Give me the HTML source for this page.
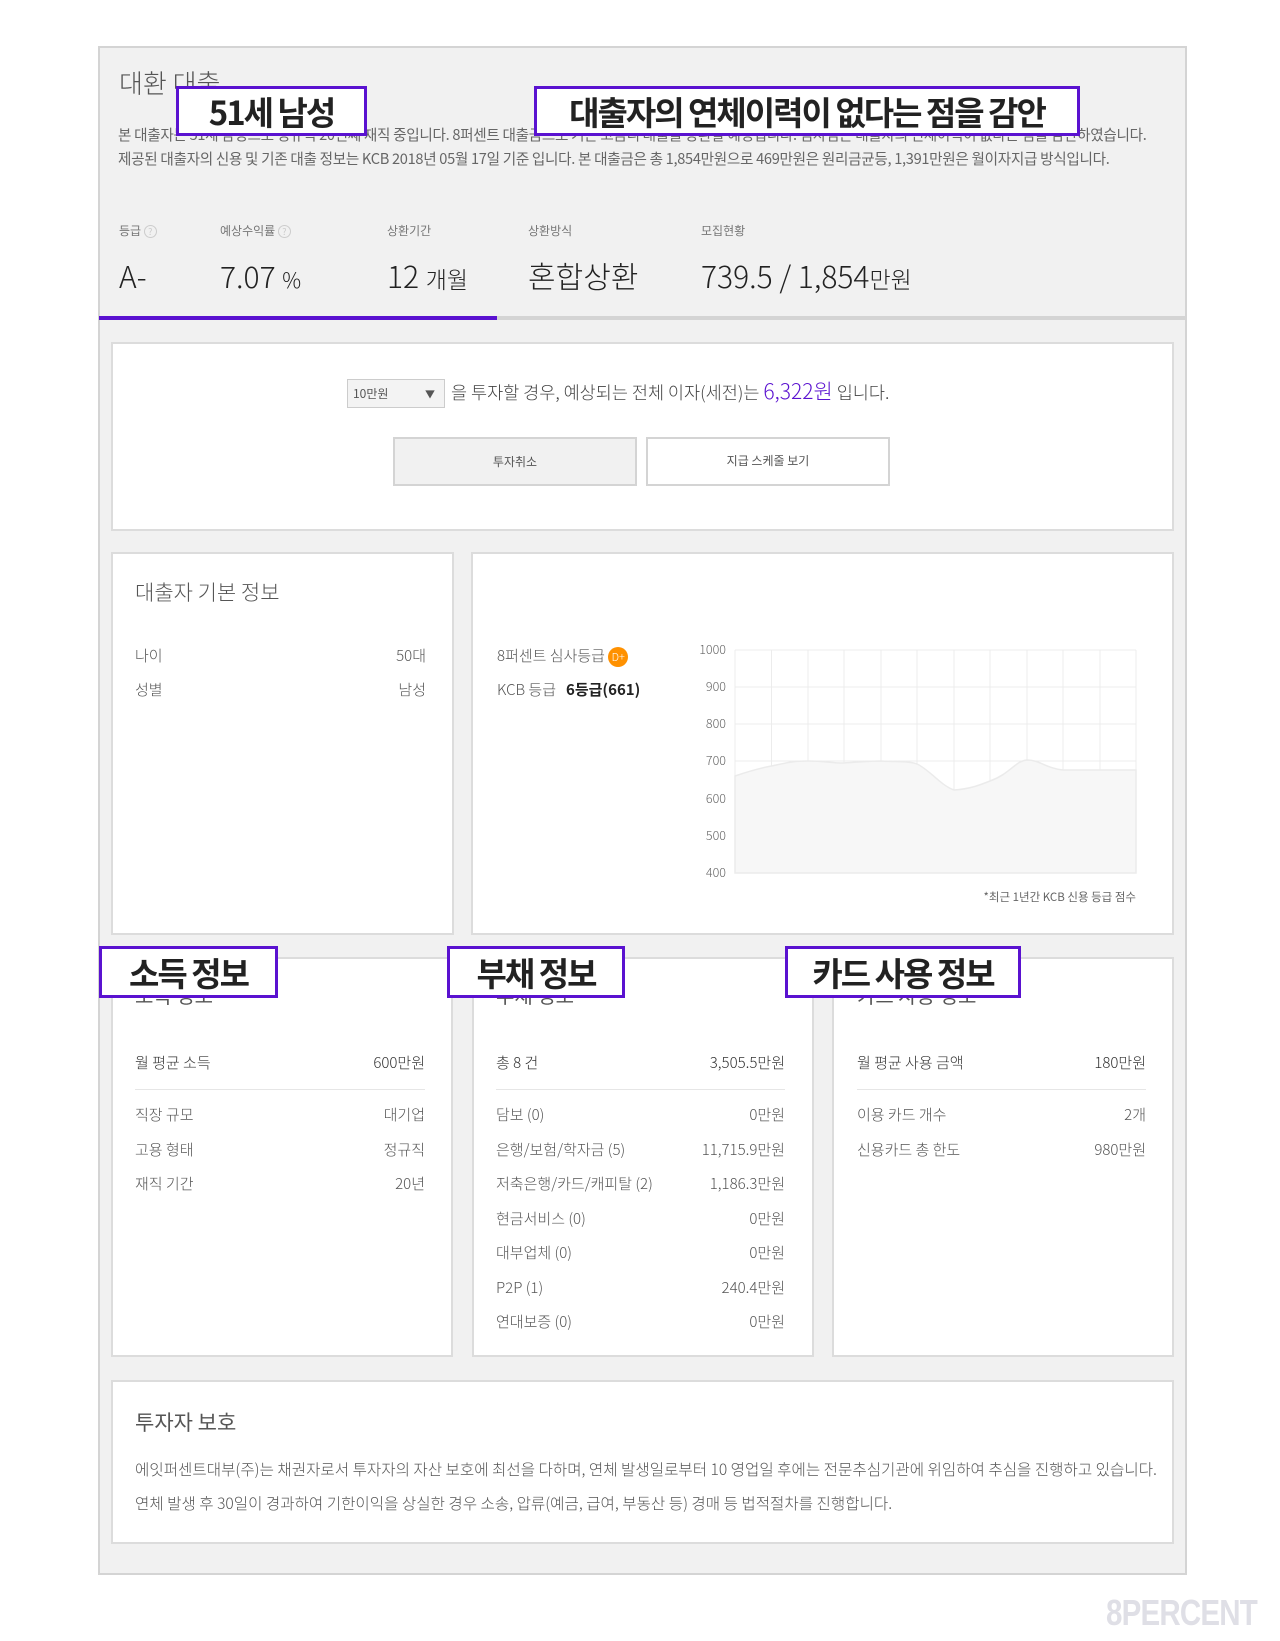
<!DOCTYPE html>
<html><head><meta charset="utf-8">
<style>
*{margin:0;padding:0;box-sizing:border-box}
body{width:1280px;height:1641px;background:#fff;position:relative;font-family:"Noto Sans CJK KR","Liberation Sans",sans-serif;color:#444;overflow:hidden}
.a{position:absolute;white-space:nowrap}
.box{position:absolute;background:#fff;border:2px solid #dcdcdc}
.ann{position:absolute;background:#fff;border:3px solid #5a12d0;font-weight:bold;color:#222;font-size:33px;letter-spacing:-2px;display:flex;align-items:center;justify-content:center;font-family:"Noto Sans CJK KR",sans-serif}
.row{position:absolute;font-size:15px;color:#555;font-weight:300;line-height:20px}
</style></head><body>
<div class="a" style="left:98px;top:46px;width:1089px;height:1529px;background:#f1f1f1;border:2px solid #d4d4d4"></div>

<div class="a" style="left:119px;top:64px;font-size:26px;color:#555;font-weight:300">대환 대출</div>
<div class="a" style="left:118px;top:125px;font-size:14.6px;color:#666;letter-spacing:-0.3px;line-height:20px">본 대출자는 51세 남성으로 정규직 20년째 재직 중입니다. 8퍼센트 대출금으로 기존 고금리 대출을 상환할 예정입니다. 심사팀은 대출자의 연체이력이 없다는 점을 감안하였습니다.</div>
<div class="a" style="left:118px;top:149px;font-size:14.6px;color:#666;letter-spacing:-0.3px;line-height:20px">제공된 대출자의 신용 및 기존 대출 정보는 KCB 2018년 05월 17일 기준 입니다. 본 대출금은 총 1,854만원으로 469만원은 원리금균등, 1,391만원은 월이자지급 방식입니다.</div>

<div class="a" style="left:119px;top:222px;font-size:12px;color:#777">등급 <span style="display:inline-block;width:13px;height:13px;border:1px solid #ccc;border-radius:50%;font-size:9px;text-align:center;line-height:11px;color:#ccc">?</span></div>
<div class="a" style="left:220px;top:222px;font-size:12px;color:#777">예상수익률 <span style="display:inline-block;width:13px;height:13px;border:1px solid #ccc;border-radius:50%;font-size:9px;text-align:center;line-height:11px;color:#ccc">?</span></div>
<div class="a" style="left:387px;top:222px;font-size:12px;color:#777">상환기간</div>
<div class="a" style="left:528px;top:222px;font-size:12px;color:#777">상환방식</div>
<div class="a" style="left:701px;top:222px;font-size:12px;color:#777">모집현황</div>
<div class="a" style="left:119px;top:255px;font-size:30px;color:#222;font-weight:300;line-height:40px">A-</div>
<div class="a" style="left:220px;top:255px;font-size:30px;color:#222;font-weight:300;line-height:40px">7.07 <span style="font-size:21px">%</span></div>
<div class="a" style="left:387px;top:255px;font-size:30px;color:#222;font-weight:300;line-height:40px">12 <span style="font-size:23px">개월</span></div>
<div class="a" style="left:528px;top:255px;font-size:30px;color:#222;font-weight:300;line-height:40px">혼합상환</div>
<div class="a" style="left:701px;top:255px;font-size:30px;color:#222;font-weight:300;line-height:40px">739.5 / 1,854<span style="font-size:23px">만원</span></div>

<div class="a" style="left:99px;top:316px;width:1087px;height:4px;background:#d4d4d4"></div>
<div class="a" style="left:99px;top:316px;width:398px;height:4px;background:#5a12d0"></div>

<div class="box" style="left:111px;top:342px;width:1063px;height:189px"></div>
<div class="a" style="left:347px;top:379px;width:98px;height:29px;border:1px solid #ccc;background:#f3f3f3;font-size:12px;color:#555;padding:5px 0 0 5px">10만원<span style="position:absolute;right:9px;top:6px;font-size:10px">▼</span></div>
<div class="a" style="left:451px;top:379px;font-size:17.5px;color:#444;font-weight:300;line-height:24px">을 투자할 경우, 예상되는 전체 이자(세전)는 <span style="color:#5a12d0;font-size:21px">6,322원</span> 입니다.</div>
<div class="a" style="left:393px;top:437px;width:244px;height:49px;background:#f1f1f1;border:2px solid #d4d4d4;font-size:12px;color:#555;text-align:center;line-height:45px">투자취소</div>
<div class="a" style="left:646px;top:437px;width:244px;height:49px;background:#fff;border:2px solid #d4d4d4;font-size:12px;color:#555;text-align:center;line-height:43px">지급 스케줄 보기</div>

<div class="box" style="left:111px;top:552px;width:343px;height:383px"></div>
<div class="a" style="left:135px;top:577px;font-size:21px;color:#555;font-weight:300">대출자 기본 정보</div>
<div class="row" style="left:135px;top:646px">나이</div><div class="row" style="left:380px;width:46px;text-align:right;top:646px">50대</div>
<div class="row" style="left:135px;top:680px">성별</div><div class="row" style="left:380px;width:46px;text-align:right;top:680px">남성</div>

<div class="box" style="left:471px;top:552px;width:703px;height:383px"></div>
<div class="row" style="left:497px;top:646px">8퍼센트 심사등급 <span style="display:inline-block;width:20px;height:20px;border-radius:50%;background:#ff9100;color:#fff;font-size:11px;text-align:center;line-height:20px;vertical-align:middle">D+</span></div>
<div class="row" style="left:497px;top:680px">KCB 등급 &nbsp; <span style="color:#222;font-weight:bold;font-size:15px">6등급(661)</span></div>
<svg class="a" style="left:690px;top:640px" width="460" height="270">
<g stroke="#ececec" stroke-width="1">
<line x1="45" y1="10" x2="446" y2="10"/><line x1="45" y1="47" x2="446" y2="47"/><line x1="45" y1="84" x2="446" y2="84"/><line x1="45" y1="121" x2="446" y2="121"/><line x1="45" y1="159" x2="446" y2="159"/><line x1="45" y1="196" x2="446" y2="196"/><line x1="45" y1="233" x2="446" y2="233"/>
<line x1="45" y1="10" x2="45" y2="233"/><line x1="81.5" y1="10" x2="81.5" y2="233"/><line x1="118" y1="10" x2="118" y2="233"/><line x1="154" y1="10" x2="154" y2="233"/><line x1="191" y1="10" x2="191" y2="233"/><line x1="227" y1="10" x2="227" y2="233"/><line x1="264" y1="10" x2="264" y2="233"/><line x1="300" y1="10" x2="300" y2="233"/><line x1="337" y1="10" x2="337" y2="233"/><line x1="373" y1="10" x2="373" y2="233"/><line x1="410" y1="10" x2="410" y2="233"/><line x1="446" y1="10" x2="446" y2="233"/>
</g>
<path d="M45,136 C60,131 70,128 81.5,126 C100,122 105,121 118,121 C135,121 140,123 154,123 C170,122 180,121 191,121 C205,122 220,121 227,124 C240,130 250,145 264,150 C280,149 290,145 300,141 C320,134 325,121 337,120 C350,120 355,128 373,130 L446,130 L446,233 L45,233 Z" fill="#f7f7f7" stroke="#ebebeb" stroke-width="1.5"/>
<g font-size="12.5" fill="#666" text-anchor="end" font-family="Noto Sans CJK KR,sans-serif" font-weight="300">
<text x="36" y="14">1000</text><text x="36" y="51">900</text><text x="36" y="88">800</text><text x="36" y="125">700</text><text x="36" y="163">600</text><text x="36" y="200">500</text><text x="36" y="237">400</text>
</g></svg>
<div class="a" style="left:880px;top:889px;width:256px;text-align:right;font-size:11.5px;color:#666">*최근 1년간 KCB 신용 등급 점수</div>

<div class="box" style="left:111px;top:957px;width:342px;height:400px"></div>
<div class="box" style="left:472px;top:957px;width:342px;height:400px"></div>
<div class="box" style="left:832px;top:957px;width:342px;height:400px"></div>
<div class="a" style="left:135px;top:980px;font-size:20px;color:#555">소득 정보</div>
<div class="a" style="left:496px;top:980px;font-size:20px;color:#555">부채 정보</div>
<div class="a" style="left:857px;top:980px;font-size:20px;color:#555">카드 사용 정보</div>

<div class="a" style="left:135px;top:1089px;width:290px;height:1px;background:#e6e6e6"></div>
<div class="a" style="left:496px;top:1089px;width:289px;height:1px;background:#e6e6e6"></div>
<div class="a" style="left:857px;top:1089px;width:289px;height:1px;background:#e6e6e6"></div>

<div class="row" style="left:135px;top:1053px;color:#333">월 평균 소득</div><div class="row" style="left:305px;width:120px;text-align:right;top:1053px;color:#333">600만원</div>
<div class="row" style="left:135px;top:1105px">직장 규모</div><div class="row" style="left:305px;width:120px;text-align:right;top:1105px">대기업</div>
<div class="row" style="left:135px;top:1140px">고용 형태</div><div class="row" style="left:305px;width:120px;text-align:right;top:1140px">정규직</div>
<div class="row" style="left:135px;top:1174px">재직 기간</div><div class="row" style="left:305px;width:120px;text-align:right;top:1174px">20년</div>

<div class="row" style="left:496px;top:1053px;color:#333">총 8 건</div><div class="row" style="left:645px;width:140px;text-align:right;top:1053px;color:#333">3,505.5만원</div>
<div class="row" style="left:496px;top:1105px">담보 (0)</div><div class="row" style="left:645px;width:140px;text-align:right;top:1105px">0만원</div>
<div class="row" style="left:496px;top:1140px">은행/보험/학자금 (5)</div><div class="row" style="left:645px;width:140px;text-align:right;top:1140px">11,715.9만원</div>
<div class="row" style="left:496px;top:1174px">저축은행/카드/캐피탈 (2)</div><div class="row" style="left:645px;width:140px;text-align:right;top:1174px">1,186.3만원</div>
<div class="row" style="left:496px;top:1209px">현금서비스 (0)</div><div class="row" style="left:645px;width:140px;text-align:right;top:1209px">0만원</div>
<div class="row" style="left:496px;top:1243px">대부업체 (0)</div><div class="row" style="left:645px;width:140px;text-align:right;top:1243px">0만원</div>
<div class="row" style="left:496px;top:1278px">P2P (1)</div><div class="row" style="left:645px;width:140px;text-align:right;top:1278px">240.4만원</div>
<div class="row" style="left:496px;top:1312px">연대보증 (0)</div><div class="row" style="left:645px;width:140px;text-align:right;top:1312px">0만원</div>

<div class="row" style="left:857px;top:1053px;color:#333">월 평균 사용 금액</div><div class="row" style="left:1006px;width:140px;text-align:right;top:1053px;color:#333">180만원</div>
<div class="row" style="left:857px;top:1105px">이용 카드 개수</div><div class="row" style="left:1006px;width:140px;text-align:right;top:1105px">2개</div>
<div class="row" style="left:857px;top:1140px">신용카드 총 한도</div><div class="row" style="left:1006px;width:140px;text-align:right;top:1140px">980만원</div>

<div class="box" style="left:111px;top:1380px;width:1063px;height:164px"></div>
<div class="a" style="left:135px;top:1407px;font-size:21px;color:#555">투자자 보호</div>
<div class="row" style="left:135px;top:1459px;font-size:15.6px">에잇퍼센트대부(주)는 채권자로서 투자자의 자산 보호에 최선을 다하며, 연체 발생일로부터 10 영업일 후에는 전문추심기관에 위임하여 추심을 진행하고 있습니다.</div>
<div class="row" style="left:135px;top:1493px;font-size:15.6px">연체 발생 후 30일이 경과하여 기한이익을 상실한 경우 소송, 압류(예금, 급여, 부동산 등) 경매 등 법적절차를 진행합니다.</div>

<div class="ann" style="left:176px;top:86px;width:191px;height:50px">51세 남성</div>
<div class="ann" style="left:534px;top:86px;width:546px;height:50px">대출자의 연체이력이 없다는 점을 감안</div>
<div class="ann" style="left:99px;top:946px;width:179px;height:52px">소득 정보</div>
<div class="ann" style="left:447px;top:946px;width:178px;height:52px">부채 정보</div>
<div class="ann" style="left:785px;top:946px;width:236px;height:52px">카드 사용 정보</div>

<div class="a" style="left:1106px;top:1592px;font-size:36px;font-weight:bold;color:#dfdfe6;font-family:'Liberation Sans Narrow','Liberation Sans',sans-serif;letter-spacing:-1px;transform:scaleX(0.82);transform-origin:left top">8PERCENT</div>
</body></html>
